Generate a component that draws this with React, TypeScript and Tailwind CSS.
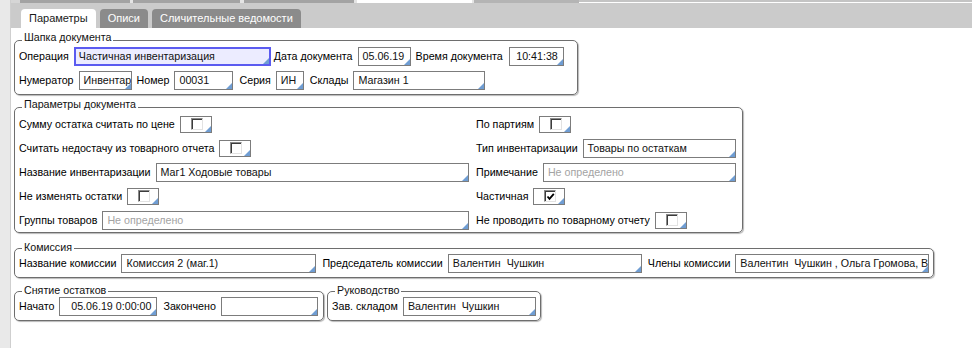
import React from "react";

const FONT = "font-['Liberation_Sans',Arial,sans-serif]";

function Corner() {
  return (
    <svg className="absolute bottom-0 right-0" width="6" height="6" viewBox="0 0 6 6">
      <path d="M6 0V6H0Z" fill="#6f9dd3" />
    </svg>
  );
}

function Field({
  className = "",
  value,
  placeholder,
  right,
  active,
}: {
  className?: string;
  value?: string;
  placeholder?: string;
  right?: boolean;
  active?: boolean;
}) {
  return (
    <div
      className={`relative flex h-[19px] shrink-0 items-center overflow-hidden whitespace-pre ${
        active ? "border-2 border-[#5b5bf0] bg-[#ececff] px-[3px]" : "border border-[#7c7c7c] bg-white px-[4px]"
      } ${right ? "justify-end pr-[5px]" : ""} ${className}`}
    >
      {value ? (
        <span className="text-[#111]">{value}</span>
      ) : (
        <span className="text-[#a3a3a3]">{placeholder}</span>
      )}
      <Corner />
    </div>
  );
}

function Check({ checked }: { checked?: boolean }) {
  return (
    <div className="relative flex h-[17px] w-[32px] shrink-0 items-center border border-[#7c7c7c] bg-white pl-[10px]">
      <div className="flex h-[12px] w-[12px] items-center justify-center border border-t-[#8a8a8a] border-l-[#8a8a8a] border-r-[#e2e2e2] border-b-[#e2e2e2] bg-white shadow-[inset_1px_1px_0_#3c3c3c]">
        {checked && (
          <svg width="9" height="9" viewBox="0 0 9 9">
            <path d="M1.5 4.5L3.5 6.8L7.8 1.8" fill="none" stroke="#000" strokeWidth="1.8" />
          </svg>
        )}
      </div>
      <Corner />
    </div>
  );
}

function Group({
  title,
  className = "",
  legendClass = "pb-[6px]",
  bodyClass = "-mt-[2px]",
  children,
}: {
  title: string;
  className?: string;
  legendClass?: string;
  bodyClass?: string;
  children: React.ReactNode;
}) {
  return (
    <fieldset
      className={`shrink-0 rounded-[5px] border border-[#6e6e6e] px-[4px] shadow-[1px_1px_1px_#b9b9b9] ${className}`}
    >
      <legend className={`ml-[3px] px-[2px] leading-[12px] text-[#111] ${legendClass}`}>{title}</legend>
      <div className={bodyClass}>{children}</div>
    </fieldset>
  );
}

function Row({ children, className = "" }: { children: React.ReactNode; className?: string }) {
  return <div className={`flex h-[20px] items-center gap-[5px] whitespace-nowrap ${className}`}>{children}</div>;
}

export default function App() {
  return (
    <div className={`flex h-[348px] w-[972px] overflow-hidden bg-white text-[10.7px] text-black ${FONT}`}>
      <div className="w-[11px] shrink-0 border-r border-[#cfcfcf] bg-[#e9e9e9]" />

      <div className="flex min-w-0 flex-1 flex-col">
        <div className="flex h-[3px] shrink-0 bg-[#c4c4c4]">
          <div className="w-[9px] bg-[#d6d6d6]" />
          <div className="w-[110px] bg-[#a3a3a3]" />
          <div className="w-[3px] bg-[#e4e4e4]" />
          <div className="w-[107px] bg-[#a3a3a3]" />
          <div className="w-[4px] bg-[#e4e4e4]" />
          <div className="w-[110px] bg-[#a3a3a3]" />
          <div className="w-[3px] bg-[#e4e4e4]" />
          <div className="w-[115px] bg-white" />
          <div className="w-[2px] bg-[#e4e4e4]" />
          <div className="w-[105px] bg-[#b4b4b4]" />
          <div className="flex-1 border-b border-white bg-[#c4c4c4]" />
        </div>

        <div className="flex h-[25px] shrink-0 items-end gap-[4px] bg-[#cbcbcb] pl-[10px] text-[11px]">
          <div className="flex h-[19px] items-center rounded-t-[4px] bg-white px-[8px] text-[#1a1a1a]">Параметры</div>
          <div className="flex h-[19px] items-center rounded-t-[4px] bg-[#8b8b8b] px-[8px] text-white">Описи</div>
          <div className="flex h-[19px] items-center rounded-t-[4px] bg-[#8b8b8b] px-[8px] text-white">
            Сличительные ведомости
          </div>
        </div>

        <div className="flex flex-col items-start pl-[3px]">
          <Group title="Шапка документа" className="mt-[3px] w-[564px] pb-[4px]">
            <div className="flex flex-col gap-[5px]">
              <div className="flex h-[19px] items-center gap-[5px] whitespace-nowrap">
                <span>Операция</span>
                <Field active className="w-[197px]" value="Частичная инвентаризация" />
                <span className="-ml-[2px]">Дата документа</span>
                <Field className="w-[53px]" value="05.06.19" />
                <span>Время документа</span>
                <Field right className="ml-[1px] w-[55px]" value="10:41:38" />
              </div>
              <div className="flex h-[19px] items-center gap-[5px] whitespace-nowrap">
                <span>Нумератор</span>
                <Field className="w-[53px] pr-0" value="Инвентар" />
                <span>Номер</span>
                <Field className="w-[59px]" value="00031" />
                <span className="ml-[1px]">Серия</span>
                <Field className="w-[28px]" value="ИН" />
                <span className="ml-[1px]">Склады</span>
                <Field className="w-[132px]" value="Магазин 1" />
              </div>
            </div>
          </Group>

          <Group title="Параметры документа" className="mt-[3px] w-[729px] pb-[2px]">
            <div className="grid grid-cols-[450px_260px] gap-x-[7px] gap-y-[4px]">
              <Row>
                <span>Сумму остатка считать по цене</span>
                <Check />
              </Row>
              <Row>
                <span>По партиям</span>
                <Check />
              </Row>
              <Row>
                <span>Считать недостачу из товарного отчета</span>
                <Check />
              </Row>
              <Row>
                <span>Тип инвентаризации</span>
                <Field className="flex-1" value="Товары по остаткам" />
              </Row>
              <Row>
                <span>Название инвентаризации</span>
                <Field className="flex-1" value="Маг1 Ходовые товары" />
              </Row>
              <Row>
                <span>Примечание</span>
                <Field className="flex-1" placeholder="Не определено" />
              </Row>
              <Row>
                <span>Не изменять остатки</span>
                <Check />
              </Row>
              <Row>
                <span>Частичная</span>
                <Check checked />
              </Row>
              <Row>
                <span>Группы товаров</span>
                <Field className="flex-1" placeholder="Не определено" />
              </Row>
              <Row>
                <span>Не проводить по товарному отчету</span>
                <Check />
              </Row>
            </div>
          </Group>

          <Group
            title="Комиссия"
            className="mt-[8px] w-[918px] pb-[4px]"
            legendClass="pb-[2px]"
            bodyClass="-mt-[1px]"
          >
            <div className="flex h-[19px] items-center gap-[5px] whitespace-nowrap">
              <span>Название комиссии</span>
              <Field className="w-[195px]" value="Комиссия 2 (маг.1)" />
              <span className="ml-[1px]">Председатель комиссии</span>
              <Field className="w-[194px]" value="Валентин  Чушкин" />
              <span className="ml-[1px]">Члены комиссии</span>
              <Field className="w-[194px] pr-0" value="Валентин  Чушкин , Ольга Громова, В" />
            </div>
          </Group>

          <div className="mt-[6px] flex gap-[3px]">
            <Group
              title="Снятие остатков"
              className="w-[310px] pb-[4px]"
              legendClass="pb-[2px]"
              bodyClass="-mt-[1px]"
            >
              <div className="flex h-[19px] items-center gap-[5px] whitespace-nowrap">
                <span>Начато</span>
                <Field right className="w-[98px] pr-[3px]" value="05.06.19 0:00:00" />
                <span className="ml-[1px]">Закончено</span>
                <Field className="w-[97px]" />
              </div>
            </Group>
            <Group
              title="Руководство"
              className="w-[213px] pb-[4px]"
              legendClass="pb-[2px]"
              bodyClass="-mt-[1px]"
            >
              <div className="flex h-[19px] items-center gap-[5px] whitespace-nowrap">
                <span>Зав. складом</span>
                <Field className="w-[133px]" value="Валентин  Чушкин" />
              </div>
            </Group>
          </div>
        </div>
      </div>
    </div>
  );
}
